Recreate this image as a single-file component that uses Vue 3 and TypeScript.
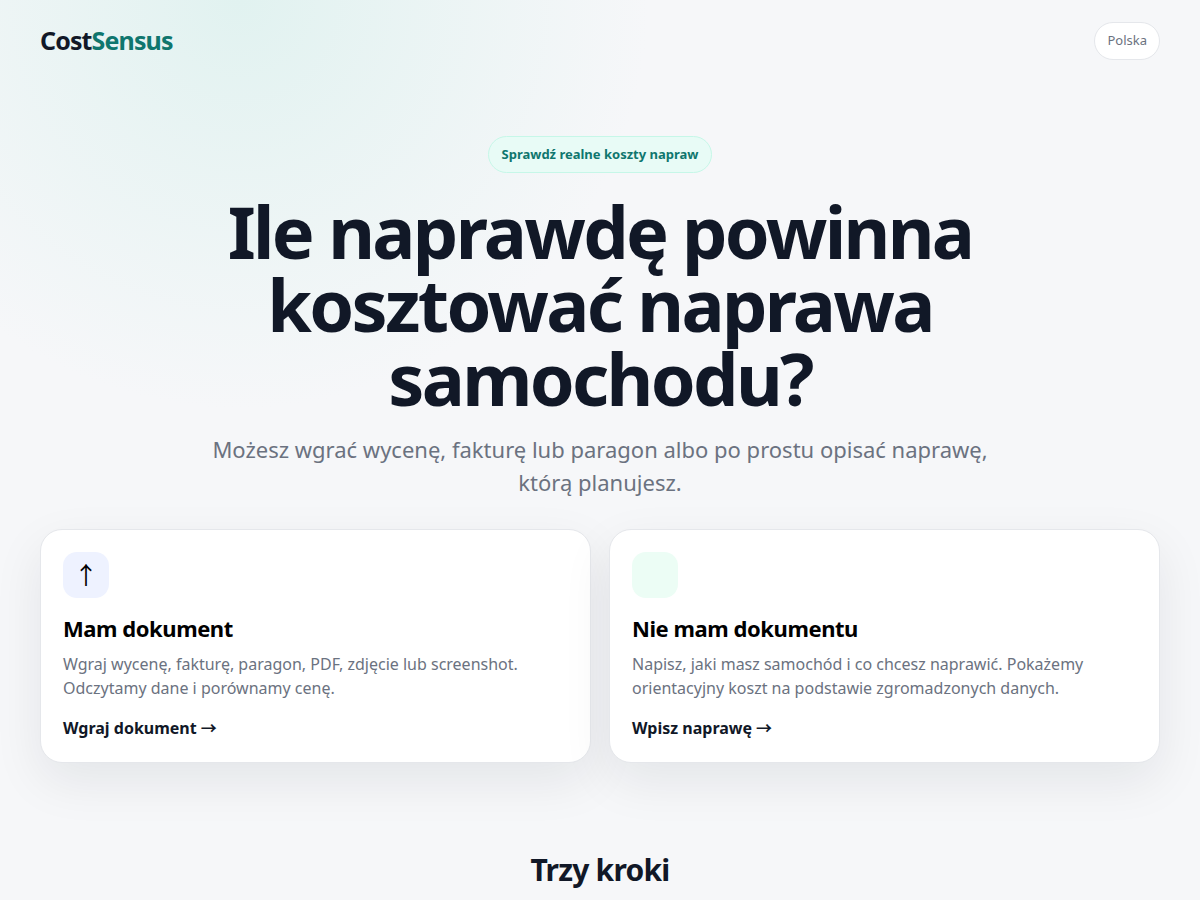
<script setup lang="ts">
interface Choice {
  id: string
  icon: string
  title: string
  text: string
  action: string
}

const choices: Choice[] = [
  {
    id: 'document',
    icon: '↑',
    title: 'Mam dokument',
    text: 'Wgraj wycenę, fakturę, paragon, PDF, zdjęcie lub screenshot. Odczytamy dane i porównamy cenę.',
    action: 'Wgraj dokument →',
  },
  {
    id: 'describe',
    icon: '',
    title: 'Nie mam dokumentu',
    text: 'Napisz, jaki masz samochód i co chcesz naprawić. Pokażemy orientacyjny koszt na podstawie zgromadzonych danych.',
    action: 'Wpisz naprawę →',
  },
]
</script>

<template>
  <div class="page">
    <header class="top">
      <a class="brand" href="#">Cost<span>Sensus</span></a>
      <button class="country" type="button">Polska</button>
    </header>
    <main>
      <section class="hero">
        <div class="badge">Sprawdź realne koszty napraw</div>
        <h1>Ile naprawdę powinna kosztować naprawa samochodu?</h1>
        <p class="lead">Możesz wgrać wycenę, fakturę lub paragon albo po prostu opisać naprawę, którą planujesz.</p>
      </section>
      <section class="choices">
        <button v-for="c in choices" :key="c.id" class="card" type="button">
          <span class="icon" :class="c.id">{{ c.icon }}</span>
          <span class="title">{{ c.title }}</span>
          <span class="text">{{ c.text }}</span>
          <span class="action">{{ c.action }}</span>
        </button>
      </section>
      <section class="steps">
        <h2>Trzy kroki</h2>
      </section>
    </main>
  </div>
</template>

<style>
body {
  margin: 0;
  background: radial-gradient(circle at 20% 0%, #e1f2f0 0, transparent 31%), #f6f7f9;
}
</style>

<style scoped>
.page {
  max-width: 1120px;
  margin: 0 auto;
  padding: 22px 24px 12px;
  color: #111827;
  font-family: "Noto Sans", "Noto Sans CJK JP", sans-serif;
  line-height: 24px;
}
.top {
  display: flex;
  align-items: center;
  justify-content: space-between;
}
.brand {
  color: #111827;
  font-size: 25px;
  font-weight: 700;
  letter-spacing: -0.035em;
  line-height: 36px;
  padding-bottom: 2px;
  text-decoration: none;
}
.brand span {
  color: #0f766e;
}
.country {
  padding: 7px 12px 9px;
  border: 1px solid #e5e7eb;
  border-radius: 999px;
  background: #fff;
  color: #6b7280;
  font-family: inherit;
  font-size: 13px;
  line-height: 20px;
}
.hero {
  max-width: 850px;
  margin: 0 auto;
  padding-top: 76px;
  text-align: center;
}
.badge {
  display: inline-block;
  padding: 8px 13px;
  border: 1px solid #c6f7e8;
  border-radius: 999px;
  background: #e8fbf6;
  color: #0f766e;
  font-size: 13px;
  font-weight: 700;
  line-height: 19px;
}
h1 {
  margin: 22px 0 18px;
  font-size: 72px;
  font-weight: 700;
  line-height: 1.02;
  letter-spacing: -0.037em;
}
.lead {
  max-width: 780px;
  margin: 0 auto;
  color: #6b7280;
  font-size: 22px;
  line-height: 33px;
}
.choices {
  display: grid;
  grid-template-columns: 1fr 1fr;
  gap: 18px;
  margin-top: 30px;
}
.card {
  display: flex;
  flex-direction: column;
  align-items: flex-start;
  padding: 22px;
  border: 1px solid #e5e7eb;
  border-radius: 22px;
  background: #fff;
  box-shadow: 0 18px 50px rgba(15, 23, 42, 0.08);
  font-family: inherit;
  font-size: 16px;
  line-height: 24px;
  text-align: left;
}
.icon {
  display: grid;
  place-items: center;
  width: 46px;
  height: 46px;
  border-radius: 14px;
  background: #eef2ff;
  color: #000;
  font-size: 24px;
}
.icon.describe {
  background: #ecfdf5;
}
.title {
  margin-top: 14px;
  color: #000;
  font-size: 22px;
  font-weight: 700;
  line-height: 33px;
  letter-spacing: -0.02em;
}
.text {
  margin-top: 7px;
  color: #6b7280;
}
.action {
  margin-top: 16px;
  color: #111827;
  font-weight: 700;
}
.steps {
  padding-top: 84px;
  text-align: center;
}
h2 {
  margin: 0;
  font-size: 30px;
  font-weight: 700;
  line-height: 45px;
  letter-spacing: -0.025em;
}
</style>
